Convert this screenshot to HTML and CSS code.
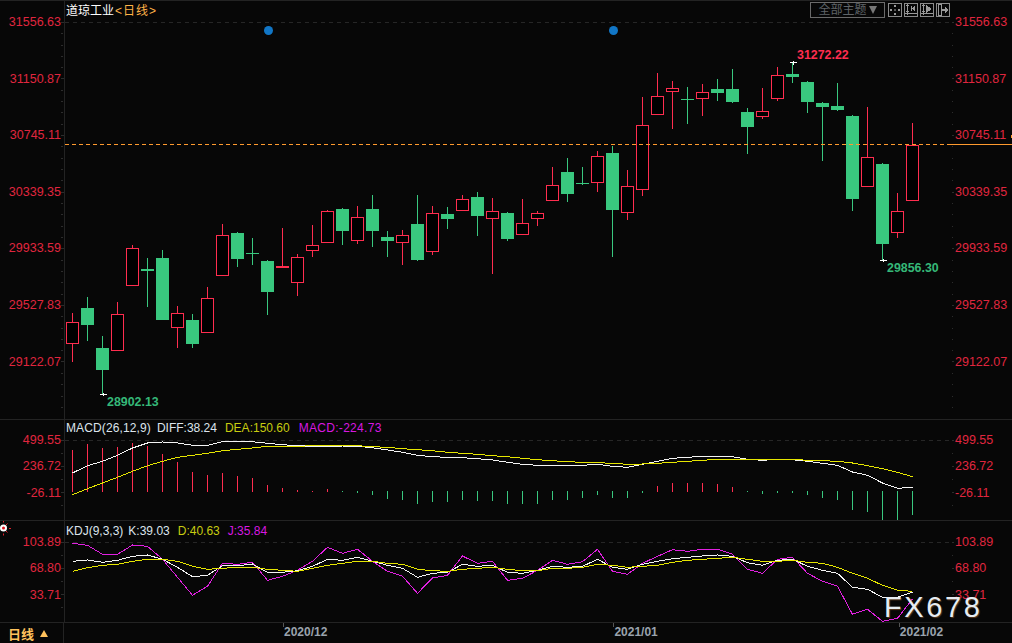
FILE: index.html
```html
<!DOCTYPE html>
<html lang="zh">
<head>
<meta charset="utf-8">
<title>道琼工业 日线</title>
<link rel="stylesheet" href="styles.css">
</head>
<body>
<main class="terminal">
  <section class="panel panel-main">
    <svg class="chart chart-main" viewBox="0 1 1012 418" aria-label="K线图">
      <line class="axis-line" x1="64.5" y1="1" x2="64.5" y2="419"/>
      <path class="ticks" d="M61 22.5h3M61 33.5h2M61 45.5h2M61 56.5h2M61 67.5h2M61 78.5h3M61 90.5h2M61 101.5h2M61 112.5h2M61 124.5h2M61 135.5h3M61 146.5h2M61 158.5h2M61 169.5h2M61 180.5h2M61 192.5h3M61 203.5h2M61 214.5h2M61 226.5h2M61 237.5h2M61 248.5h3M61 260.5h2M61 271.5h2M61 282.5h2M61 294.5h2M61 305.5h3M61 316.5h2M61 328.5h2M61 339.5h2M61 350.5h2M61 361.5h3M61 373.5h2M61 384.5h2M61 396.5h2M61 407.5h2"/>
      <path class="ticks" d="M952 22.5h2M952 33.5h1M952 45.5h1M952 56.5h1M952 67.5h1M952 78.5h2M952 90.5h1M952 101.5h1M952 112.5h1M952 124.5h1M952 135.5h2M952 146.5h1M952 158.5h1M952 169.5h1M952 180.5h1M952 192.5h2M952 203.5h1M952 214.5h1M952 226.5h1M952 237.5h1M952 248.5h2M952 260.5h1M952 271.5h1M952 282.5h1M952 294.5h1M952 305.5h2M952 316.5h1M952 328.5h1M952 339.5h1M952 350.5h1M952 361.5h2M952 373.5h1M952 384.5h1M952 396.5h1M952 407.5h1"/>
      <line class="grid-dash" x1="65" y1="22.5" x2="951" y2="22.5"/>

      <path class="wick-down" d="M87.5 297V341M102.5 336V394M147.5 258V307M162.5 250V320M192.5 314V348M237.5 232V267M252.5 238V265M267.5 260V315M342.5 208V245M372.5 195V247M387.5 231V257M417.5 195V261M447.5 207V229M477.5 192V236M507.5 212V241M567.5 158V202M582.5 167V185M612.5 146V257M687.5 87V124M717.5 79V101M732.5 69V103M747.5 108V154M792.5 62V83M807.5 81V113M822.5 102V161M837.5 83V111M852.5 115V211M882.5 163V260"/>
      <path class="body-down" d="M81 308h13v17h-13zM96 348h13v22h-13zM141 269h13v2h-13zM156 258h13v62h-13zM186 320h13v24h-13zM231 233h13v26h-13zM246 253h13v1h-13zM261 261h13v31h-13zM336 209h13v22h-13zM366 209h13v22h-13zM381 237h13v4h-13zM411 224h13v36h-13zM441 214h13v5h-13zM471 197h13v19h-13zM501 213h13v26h-13zM561 172h13v22h-13zM576 183h13v1h-13zM606 153h13v57h-13zM681 99h13v1h-13zM711 89h13v4h-13zM726 89h13v13h-13zM741 112h13v15h-13zM786 74h13v3h-13zM801 82h13v20h-13zM816 103h13v4h-13zM831 106h13v4h-13zM846 116h13v83h-13zM876 164h13v80h-13z"/>

      <path class="wick-up" d="M72.5 313V362M117.5 302V351M132.5 245V286M177.5 306V348M207.5 287V333M222.5 224V276M282.5 228V268M297.5 254V296M312.5 225V257M327.5 210V243M357.5 206V244M402.5 230V265M432.5 206V255M462.5 195V211M492.5 198V274M522.5 199V235M537.5 211V226M552.5 167V201M597.5 151V192M627.5 170V220M642.5 97V196M657.5 73V115M672.5 81V129M702.5 84V116M762.5 88V119M777.5 67V101M867.5 107V187M897.5 193V238M912.5 123V201"/>
      <path class="body-up" d="M66.5 322.5h12v21h-12zM111.5 314.5h12v36h-12zM126.5 248.5h12v37h-12zM171.5 313.5h12v14h-12zM201.5 298.5h12v34h-12zM216.5 235.5h12v40h-12zM276.5 266.5h12v1h-12zM291.5 257.5h12v25h-12zM306.5 245.5h12v5h-12zM321.5 211.5h12v31h-12zM351.5 217.5h12v23h-12zM396.5 235.5h12v7h-12zM426.5 213.5h12v38h-12zM456.5 199.5h12v11h-12zM486.5 211.5h12v7h-12zM516.5 223.5h12v11h-12zM531.5 213.5h12v5h-12zM546.5 185.5h12v15h-12zM591.5 156.5h12v26h-12zM621.5 186.5h12v26h-12zM636.5 125.5h12v64h-12zM651.5 96.5h12v18h-12zM666.5 88.5h12v3h-12zM696.5 92.5h12v6h-12zM756.5 111.5h12v5h-12zM771.5 75.5h12v23h-12zM861.5 157.5h12v29h-12zM891.5 211.5h12v21h-12zM906.5 145.5h12v55h-12z"/>

      <line class="price-dash" x1="65" y1="144.5" x2="951" y2="144.5"/>
      <line class="price-solid" x1="951" y1="144.5" x2="1012" y2="144.5"/>
      <path class="price-solid" d="M1011.5 135v3"/>

      <path class="cross" d="M100 394.5h7M103.5 393v3M790 62.5h7M793.5 61v4M880 260.5h7M883.5 259v3"/>
      <circle class="marker" cx="268.5" cy="30.5" r="4.5"/>
      <circle class="marker" cx="613.5" cy="30.5" r="4.5"/>

      <g class="axis-text">
        <text x="61" y="26" class="end">31556.63</text>
        <text x="61" y="82.5" class="end">31150.87</text>
        <text x="61" y="139" class="end">30745.11</text>
        <text x="61" y="196" class="end">30339.35</text>
        <text x="61" y="252" class="end">29933.59</text>
        <text x="61" y="309" class="end">29527.83</text>
        <text x="61" y="366" class="end">29122.07</text>
        <text x="955" y="26">31556.63</text>
        <text x="955" y="82.5">31150.87</text>
        <text x="955" y="139">30745.11</text>
        <text x="955" y="196">30339.35</text>
        <text x="955" y="252">29933.59</text>
        <text x="955" y="309">29527.83</text>
        <text x="955" y="366">29122.07</text>
      </g>
      <text class="extreme extreme-high" x="797" y="59">31272.22</text>
      <text class="extreme extreme-low" x="107" y="406">28902.13</text>
      <text class="extreme extreme-low" x="887" y="272">29856.30</text>
    </svg>

    <div class="legend legend-title">
      <span class="c-white">道琼工业</span><span class="c-orange">&lt;日线&gt;</span>
    </div>

    <div class="toolbar">
      <div class="theme-btn"><span>全部主题</span><span class="theme-arrow"></span></div>
      <div class="tool-btn">
        <svg class="tool-icon" viewBox="0 0 12 12"><path d="M5 1h2v2H5zM5 9h2v2H5zM1 5h2v2H1zM9 5h2v2H9z"/><path class="tool-dot" d="M5 5h2v2H5z"/></svg>
      </div>
      <div class="tool-btn">
        <svg class="tool-icon" viewBox="0 0 12 12"><path class="tool-line" d="M2.5 0v10.5M0 9.5h12M1 1.5h3M1 7.5h3"/><path d="M6 2h1v5H6zM7 4h1v1H7zM8 3h1v3H8zM9 2h1v5H9z"/></svg>
      </div>
      <div class="tool-btn">
        <svg class="tool-icon" viewBox="0 0 12 12"><path class="tool-line" d="M2.5 0v10.5M0 9.5h12M1 1.5h3M1 7.5h3"/><path d="M5 1l6 4-6 4z"/></svg>
      </div>
      <div class="tool-btn">
        <svg class="tool-icon" viewBox="0 0 12 12"><path class="tool-line" d="M1.5 .5h3v11h-3z"/><path d="M5 5h3V3l4 3-4 3V7H5z"/></svg>
      </div>
    </div>
  </section>

  <section class="panel panel-macd">
    <svg class="chart chart-macd" viewBox="0 420 1012 100" aria-label="MACD">
      <line class="axis-line" x1="64.5" y1="420" x2="64.5" y2="520"/>
      <path class="ticks" d="M61 440.5h3M61 466.5h3M61 492.5h3M61 453.5h2M61 479.5h2M61 505.5h2M952 440.5h2M952 466.5h2M952 492.5h2M952 453.5h1M952 479.5h1M952 505.5h1"/>
      <line class="grid-dash" x1="65" y1="440.5" x2="951" y2="440.5"/>
      <path class="hist-up" d="M72.5 450V492M87.5 444V492M102.5 448V492M117.5 447V492M132.5 443V492M147.5 446V492M162.5 454V492M177.5 462V492M192.5 472V492M207.5 475V492M222.5 473V492M237.5 476V492M252.5 478V492M267.5 485V492M282.5 488V492M297.5 490V492M312.5 491V492M327.5 489V492M657.5 486V492M672.5 483V492M687.5 483V492M702.5 483V492M717.5 484V492M732.5 487V492"/>
      <path class="hist-down" d="M342.5 491V492M357.5 491V493M372.5 491V495M387.5 491V499M402.5 491V500M417.5 491V504M432.5 491V502M447.5 491V502M462.5 491V500M477.5 491V501M492.5 491V501M507.5 491V504M522.5 491V504M537.5 491V504M552.5 491V500M567.5 491V500M582.5 491V498M597.5 491V495M612.5 491V498M627.5 491V498M642.5 491V493M747.5 491V492M762.5 491V494M777.5 491V493M792.5 491V493M807.5 491V495M822.5 491V498M837.5 491V500M852.5 491V510M867.5 491V512M882.5 491V520M897.5 491V520M912.5 491V515"/>
      <polyline class="line-white" points="72.5,473 87.5,465.7 102.5,461.3 117.5,455.3 132.5,448 147.5,443 162.5,442 177.5,443 192.5,445.3 207.5,445.3 222.5,441.7 237.5,441.3 252.5,441.7 267.5,443.3 282.5,444.7 297.5,445.7 312.5,446.3 327.5,446.3 342.5,446 357.5,446.3 372.5,447.7 387.5,450 402.5,452.3 417.5,455.3 432.5,456.7 447.5,457.3 462.5,457.7 477.5,458.7 492.5,460 507.5,462.3 522.5,464.3 537.5,465.3 552.5,465.3 567.5,465.3 582.5,465.3 597.5,464.3 612.5,466.3 627.5,467.3 642.5,464.3 657.5,461.3 672.5,458.3 687.5,457.3 702.5,456.3 717.5,456.3 732.5,456.7 747.5,459.3 762.5,460.3 777.5,459.3 792.5,459.7 807.5,461.3 822.5,463.3 837.5,465.3 852.5,472 867.5,475.3 882.5,483 897.5,488.3 912.5,487.3"/>
      <polyline class="line-yellow" points="72.5,494.7 87.5,488.7 102.5,483 117.5,477.3 132.5,471.3 147.5,465.7 162.5,461.3 177.5,457.3 192.5,455.3 207.5,453.3 222.5,450.7 237.5,449.3 252.5,448 267.5,446.3 282.5,446.3 297.5,446.3 312.5,445.7 327.5,445.7 342.5,445.3 357.5,445.7 372.5,446.7 387.5,447.3 402.5,448.7 417.5,449.7 432.5,450.7 447.5,452.3 462.5,453.3 477.5,454.3 492.5,455.7 507.5,456.7 522.5,458.3 537.5,459.7 552.5,460.7 567.5,461.7 582.5,462.3 597.5,462.7 612.5,463.3 627.5,464.3 642.5,464 657.5,463.3 672.5,462.3 687.5,461.3 702.5,460.3 717.5,459.3 732.5,459.3 747.5,459.3 762.5,459.3 777.5,459.3 792.5,459.3 807.5,460.3 822.5,460.7 837.5,461.3 852.5,463 867.5,465.7 882.5,468.7 897.5,472.3 912.5,476.7"/>
      <g class="axis-text">
        <text x="61" y="444" class="end">499.55</text>
        <text x="61" y="470" class="end">236.72</text>
        <text x="61" y="496.5" class="end">-26.11</text>
        <text x="955" y="444">499.55</text>
        <text x="955" y="470">236.72</text>
        <text x="955" y="496.5">-26.11</text>
      </g>
    </svg>
    <div class="legend legend-macd">
      <span class="c-pale">MACD(26,12,9)</span>
      <span class="c-pale">DIFF:38.24</span>
      <span class="c-yellow">DEA:150.60</span>
      <span class="c-magenta">MACD:-224.73</span>
    </div>
  </section>

  <section class="panel panel-kdj">
    <svg class="chart chart-kdj" viewBox="0 521 1012 101" aria-label="KDJ">
      <line class="axis-line" x1="64.5" y1="521" x2="64.5" y2="622"/>
      <path class="ticks" d="M61 542.5h3M61 568.5h3M61 594.5h3M61 555.5h2M61 581.5h2M61 607.5h2M952 542.5h2M952 568.5h2M952 594.5h2M952 555.5h1M952 581.5h1M952 607.5h1"/>
      <line class="grid-dash" x1="65" y1="542.5" x2="951" y2="542.5"/>
      <g class="alert-icon">
        <path class="alert-rays" d="M3.5 520.5v2M3.5 533.5v2M-2 528.5h-1M9 528.5h2M7.5 523.5l-1.5 1.5M7.5 532.5l-1.5 -1.5"/>
        <circle class="alert-ring" cx="3.5" cy="528" r="3.5"/>
        <circle class="alert-core" cx="3.5" cy="528" r="1.5"/>
      </g>
      <polyline class="line-magenta" points="72.5,543.3 87.5,545.3 102.5,554.3 117.5,554.3 132.5,545 147.5,546.3 162.5,559.3 177.5,577.3 192.5,595.3 207.5,586.3 222.5,563.3 237.5,564.3 252.5,562.3 267.5,580.3 282.5,576.3 297.5,570.3 312.5,561.3 327.5,547.3 342.5,553.3 357.5,549.3 372.5,561.3 387.5,571.3 402.5,576.3 417.5,593.3 432.5,578 447.5,575.3 462.5,556 477.5,563.3 492.5,561.3 507.5,580.3 522.5,578.3 537.5,570.3 552.5,560.3 567.5,564.3 582.5,561.7 597.5,549.3 612.5,571.3 627.5,574.3 642.5,563.3 657.5,556.3 672.5,549.7 687.5,551.3 702.5,549.3 717.5,549.3 732.5,554.3 747.5,569.3 762.5,573.3 777.5,559.3 792.5,557.3 807.5,573.3 822.5,581.3 837.5,586.3 852.5,614.3 867.5,609.3 882.5,621.3 897.5,618.3 912.5,599"/>
      <polyline class="line-white" points="72.5,561.3 87.5,560 102.5,562.3 117.5,560.3 132.5,556.3 147.5,555 162.5,559.3 177.5,567.3 192.5,576.7 207.5,575.3 222.5,565.7 237.5,565.7 252.5,564 267.5,572.3 282.5,572.3 297.5,570.7 312.5,566.3 327.5,559.3 342.5,560.3 357.5,557.3 372.5,561.3 387.5,565.3 402.5,568.3 417.5,577.3 432.5,573.3 447.5,572.3 462.5,564.3 477.5,566.3 492.5,565.3 507.5,572.3 522.5,573.3 537.5,570.3 552.5,566.3 567.5,567.3 582.5,566.3 597.5,559.3 612.5,567.3 627.5,569.3 642.5,564.3 657.5,561.3 672.5,558.7 687.5,557.3 702.5,556 717.5,555 732.5,556.3 747.5,562.7 762.5,565.3 777.5,560.3 792.5,559.3 807.5,566.3 822.5,570.3 837.5,573.3 852.5,587.3 867.5,589.3 882.5,597.3 897.5,597.3 912.5,592"/>
      <polyline class="line-yellow" points="72.5,571.3 87.5,567.7 102.5,565.3 117.5,564.3 132.5,561.3 147.5,559.3 162.5,559.3 177.5,561.3 192.5,566.3 207.5,569.3 222.5,568.3 237.5,567.3 252.5,567.3 267.5,569.3 282.5,570.3 297.5,571.3 312.5,568.3 327.5,565.3 342.5,563.3 357.5,561.3 372.5,561.3 387.5,563.3 402.5,564.3 417.5,569.3 432.5,570.7 447.5,571.3 462.5,569.3 477.5,568.3 492.5,567.3 507.5,569.3 522.5,570.7 537.5,570.7 552.5,568.3 567.5,568.3 582.5,567.3 597.5,564.3 612.5,565.3 627.5,567.3 642.5,566.3 657.5,565.3 672.5,562.3 687.5,560.3 702.5,559.3 717.5,558.3 732.5,557.3 747.5,559.3 762.5,561.3 777.5,561.3 792.5,560.3 807.5,562.3 822.5,563.3 837.5,567.3 852.5,573.3 867.5,578.3 882.5,585.3 897.5,590.3 912.5,591.3"/>
      <g class="axis-text">
        <text x="61" y="546" class="end">103.89</text>
        <text x="61" y="572" class="end">68.80</text>
        <text x="61" y="599" class="end">33.71</text>
        <text x="955" y="546">103.89</text>
        <text x="955" y="572">68.80</text>
        <text x="955" y="599">33.71</text>
      </g>
    </svg>
    <div class="legend legend-kdj">
      <span class="c-pale">KDJ(9,3,3)</span>
      <span class="c-pale">K:39.03</span>
      <span class="c-yellow">D:40.63</span>
      <span class="c-magenta">J:35.84</span>
    </div>
    <div class="watermark">FX678</div>
  </section>

  <footer class="timebar">
    <div class="period">日线<span class="period-arrow"></span></div>
    <div class="dates">
      <span class="date date-dec">2020/12</span>
      <span class="date date-jan">2021/01</span>
      <span class="date date-feb">2021/02</span>
    </div>
  </footer>
</main>
</body>
</html>
```
FILE: styles.css
```css
* { box-sizing: border-box; }
html, body { margin: 0; padding: 0; background: #070707; }
body { font-family: "Liberation Sans", "Noto Sans CJK SC", sans-serif; overflow: hidden; }

.terminal {
  width: 1012px;
  height: 643px;
  display: flex;
  flex-direction: column;
  background: #070707;
  border-top: 1px solid #232323;
}

.panel { position: relative; flex: none; border-bottom: 1px solid #232323; }
.panel-main { height: 419px; }
.panel-macd { height: 101px; }
.panel-kdj { height: 102px; }

.chart { display: block; width: 1012px; overflow: hidden; }
.chart-main { height: 418px; }
.chart-macd { height: 100px; }
.chart-kdj { height: 101px; }

.axis-line { stroke: #232323; stroke-width: 1; shape-rendering: crispEdges; }
.ticks { stroke: #2c2c2c; stroke-width: 1; fill: none; shape-rendering: crispEdges; }
.grid-dash { stroke: #262626; stroke-width: 1; stroke-dasharray: 4 4; shape-rendering: crispEdges; }

.wick-up, .hist-up { stroke: #ff2d4f; stroke-width: 1; fill: none; shape-rendering: crispEdges; }
.wick-down, .hist-down { stroke: #39c87f; stroke-width: 1; fill: none; shape-rendering: crispEdges; }
.body-up { stroke: #ff2d4f; stroke-width: 1; fill: #000; shape-rendering: crispEdges; }
.body-down { fill: #39c87f; shape-rendering: crispEdges; }

.price-dash { stroke: #ff9a2e; stroke-width: 1; stroke-dasharray: 4 3; shape-rendering: crispEdges; }
.price-solid { stroke: #ff9a2e; stroke-width: 1; fill: none; shape-rendering: crispEdges; }
.cross { stroke: #fff; stroke-width: 1; fill: none; shape-rendering: crispEdges; }
.marker { fill: #1176c6; }

.axis-text text {
  font-size: 12.5px;
  fill: #e0263f;
}
.axis-text .end { text-anchor: end; }

.extreme { font-size: 12.4px; font-weight: 700; }
.extreme-high { fill: #ff2d4f; }
.extreme-low { fill: #35b878; }

.line-white { fill: none; stroke: #f4f4f4; stroke-width: 1; shape-rendering: crispEdges; }
.line-yellow { fill: none; stroke: #e6e600; stroke-width: 1; shape-rendering: crispEdges; }
.line-magenta { fill: none; stroke: #e020e0; stroke-width: 1; shape-rendering: crispEdges; }

.alert-rays { stroke: #e0202c; stroke-width: 1; fill: none; }
.alert-ring { fill: #fff; }
.alert-core { fill: #e0101c; }

.legend {
  position: absolute;
  display: flex;
  align-items: center;
  font-size: 12px;
  line-height: 14px;
  white-space: nowrap;
}
.legend-title { left: 66px; top: 3px; gap: 1px; }
.legend-title .c-orange { letter-spacing: 1px; }
.legend-macd { left: 66px; top: 1px; gap: 6px; }
.legend-macd .c-pale:first-child { letter-spacing: .12px; }
.legend-macd .c-yellow { margin-left: 2px; }
.legend-macd .c-magenta { margin-left: 3px; letter-spacing: .3px; }
.legend-kdj { left: 66px; top: 3px; gap: 5px; }
.legend-kdj .c-yellow, .legend-kdj .c-magenta { margin-left: 3px; }

.c-white { color: #fff; }
.c-pale { color: #dce4ec; }
.c-orange { color: #ffb347; }
.c-yellow { color: #c8cc10; }
.c-magenta { color: #d818e0; }

.toolbar {
  position: absolute;
  top: 1px;
  right: 62px;
  display: flex;
  align-items: center;
  gap: 2px;
}
.theme-btn {
  width: 75px;
  height: 16px;
  margin-right: 1px;
  border: 1px solid #6a6a6a;
  display: flex;
  align-items: center;
  justify-content: center;
  gap: 2px;
  font-size: 12px;
  line-height: 14px;
  color: #5f6468;
}
.theme-arrow {
  width: 0;
  height: 0;
  border-left: 4.5px solid transparent;
  border-right: 4.5px solid transparent;
  border-top: 8px solid #777;
}
.tool-btn {
  width: 14px;
  height: 14px;
  border: 1px solid #8a8a8a;
  display: flex;
}
.tool-icon { width: 12px; height: 12px; fill: #9a9a9a; shape-rendering: crispEdges; }
.tool-line { fill: none; stroke: #9a9a9a; stroke-width: 1; }
.tool-dot { fill: #555; }

.watermark {
  position: absolute;
  left: 884px;
  top: 71px;
  font-size: 29px;
  line-height: 30px;
  letter-spacing: 2.6px;
  color: #e6ecf2;
  text-shadow: 1px 1px 1px #5a3a20;
  white-space: nowrap;
}

.timebar { flex: 1; display: flex; min-height: 0; }
.period {
  flex: none;
  width: 64px;
  border-right: 1px solid #232323;
  padding-left: 8px;
  display: flex;
  align-items: center;
  gap: 6px;
  color: #ffc25c;
  font-size: 13px;
  font-weight: 700;
}
.period-arrow {
  width: 0;
  height: 0;
  border-left: 4px solid transparent;
  border-right: 4px solid transparent;
  border-bottom: 7px solid #ffc25c;
}
.dates {
  flex: 1;
  display: flex;
  align-items: center;
  padding-bottom: 2px;
  font-size: 12px;
  font-weight: 700;
  color: #9aa3ad;
}
.date { position: relative; flex: none; }
.date::before {
  content: "";
  position: absolute;
  left: -1px;
  top: -2px;
  width: 1px;
  height: 4px;
  background: #555;
}
.date-dec { margin-left: 220px; }
.date-jan { margin-left: 287px; }
.date-feb { margin-left: 242px; }
```
